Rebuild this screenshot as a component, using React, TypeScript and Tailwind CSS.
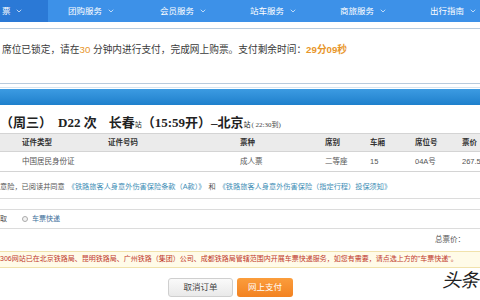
import { ChevronDown } from "lucide-react";

const NAV = [
  { label: "团购服务", w: "w-[92px]" },
  { label: "会员服务", w: "w-[90px]" },
  { label: "站车服务", w: "w-[90px]" },
  { label: "商旅服务", w: "w-[90px]" },
  { label: "出行指南", w: "w-[50px]" },
];

const COLS = "grid grid-cols-[86px_132px_85px_45px_45px_47px_1fr] pl-[22px]";

export default function App() {
  return (
    <div
      className="w-[480px] h-[300px] overflow-hidden bg-white relative text-[#333]"
      style={{ fontFamily: '"Liberation Sans", "Noto Sans CJK SC", sans-serif' }}
    >
      {/* top nav */}
      <div className="flex h-[22px] bg-[#3d91e8] text-white text-[8.5px]">
        <div className="w-[48px] bg-[#2b79d6] flex items-center pl-[2px] gap-[4px]">
          <span>票</span>
          <ChevronDown size={8} strokeWidth={2} />
        </div>
        <div className="flex items-center ml-[20px]">
          {NAV.map((n) => (
            <div key={n.label} className={`${n.w} flex items-center gap-[5px]`}>
              <span>{n.label}</span>
              <ChevronDown size={8} strokeWidth={2} />
            </div>
          ))}
        </div>
      </div>

      {/* lock notice */}
      <div className="mt-[6px] h-[56px] border-y border-[#b9cbdd] flex items-center pl-[2px] pb-[12px] text-[9.7px] text-[#3a3a3a] whitespace-nowrap">
        <span>
          席位已锁定，请在<span className="text-[#e8962a]">30</span> 分钟内进行支付，完成网上购票。支付剩余时间：
          <span className="text-[#e8962a] font-bold">29分09秒</span>
        </span>
      </div>

      {/* blue band */}
      <div className="mt-[3px] border-t border-[#d6e4f0] pt-[1px]">
        <div className="h-[16px] bg-gradient-to-b from-[#3c9be2] to-[#1e80cc]" />
      </div>

      {/* train title */}
      <div
        className="h-[28px] flex items-end pb-[1px] whitespace-nowrap text-[13px] font-bold text-[#222]"
        style={{ fontFamily: '"Liberation Serif", "Noto Sans CJK SC", serif' }}
      >
        <span>（周三）</span>
        <span className="ml-[6px]">D22 次</span>
        <span className="ml-[12px]">长春<span className="text-[7px] font-normal">站</span></span>
        <span>（15:59开）</span>
        <span>–北京<span className="text-[7px] font-normal">站</span></span>
        <span className="text-[7px] font-normal text-[#444] ml-[1px] mb-[2px]">( 22:30到)</span>
      </div>

      {/* passenger table */}
      <div className="border-y border-[#d4d4d4] text-[7.5px] whitespace-nowrap">
        <div className={`${COLS} h-[17px] items-center bg-[#ebebeb] font-bold text-[#333]`}>
          <span>证件类型</span>
          <span>证件号码</span>
          <span>票种</span>
          <span>席别</span>
          <span>车厢</span>
          <span>席位号</span>
          <span>票价</span>
        </div>
        <div className={`${COLS} h-[20px] items-center border-t border-[#d4d4d4] text-[#555]`}>
          <span>中国居民身份证</span>
          <span></span>
          <span>成人票</span>
          <span>二等座</span>
          <span>15</span>
          <span>04A号</span>
          <span>267.5</span>
        </div>
      </div>

      {/* insurance */}
      <div className="mt-[4px] h-[23px] border-b border-[#dcdcdc] flex items-center text-[7.2px] whitespace-nowrap text-[#555]">
        <span>意险，已阅读并同意</span>
        <span className="text-[#3d8db5] ml-[3px]">《铁路旅客人身意外伤害保险条款（A款）》</span>
        <span className="mx-[3px]">和</span>
        <span className="text-[#3d8db5]">《铁路旅客人身意外伤害保险（指定行程）投保须知》</span>
      </div>

      {/* delivery */}
      <div className="mt-[10px] h-[20px] border-y border-[#dcdcdc] flex items-center text-[7px] text-[#555] whitespace-nowrap">
        <span>取</span>
        <span className="ml-[15px] w-[6px] h-[6px] rounded-full border border-[#aaa] bg-[#f3f3f3]" />
        <span className="ml-[4px] text-[#3d6f9a]">车票快递</span>
      </div>

      {/* total */}
      <div className="h-[22px] flex items-center justify-end pr-[15px] text-[7.5px] text-[#555]">
        <span>总票价：</span>
      </div>

      {/* notice */}
      <div className="h-[17px] bg-[#fffbe8] border-y border-[#f1e2ac] flex items-center text-[7px] text-[#c0392b] whitespace-nowrap">
        306网站已在北京铁路局、昆明铁路局、广州铁路（集团）公司、成都铁路局管辖范围内开展车票快递服务，如您有需要，请点选上方的"车票快递"。
      </div>

      {/* buttons */}
      <div className="mt-[10px] flex gap-[4px] pl-[168px]">
        <button className="w-[65px] h-[19px] rounded-[3px] border border-[#cfcfcf] bg-gradient-to-b from-[#fafafa] to-[#e9e9e9] text-[8.5px] text-[#444]">
          取消订单
        </button>
        <button className="w-[56px] h-[19px] rounded-[3px] bg-gradient-to-b from-[#fb9d3c] to-[#f28220] text-[8.5px] text-white">
          网上支付
        </button>
      </div>

      {/* watermark */}
      <div
        className="absolute right-[2px] bottom-[7px] text-[19px] text-[#222] tracking-[-1px] italic"
        style={{ fontFamily: '"Noto Sans CJK SC", sans-serif' }}
      >
        头条
      </div>
    </div>
  );
}
